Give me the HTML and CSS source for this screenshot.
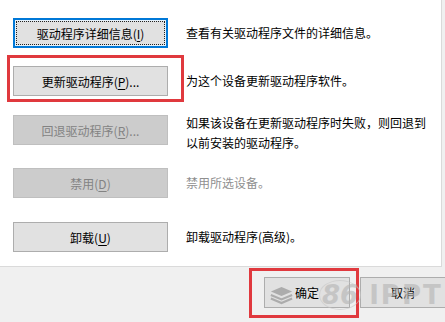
FILE: index.html
```html
<!DOCTYPE html>
<html lang="zh-CN">
<head>
  <meta charset="UTF-8">
  <title>驱动程序</title>
  <link rel="stylesheet" href="styles.css">
</head>
<body>

<div class="panel">
  <div class="row">
    <button class="btn focus"><span class="focus-rect">驱动程序详细信息(<u>I</u>)</span></button>
    <p class="desc">查看有关驱动程序文件的详细信息。</p>
  </div>
  <div class="row">
    <button class="btn">更新驱动程序(<u>P</u>)...</button>
    <p class="desc">为这个设备更新驱动程序软件。</p>
  </div>
  <div class="row row-3">
    <button class="btn" disabled>回退驱动程序(<u>R</u>)...</button>
    <p class="desc">如果该设备在更新驱动程序时失败，则回退到<br>以前安装的驱动程序。</p>
  </div>
  <div class="row row-4">
    <button class="btn" disabled>禁用(<u>D</u>)</button>
    <p class="desc muted">禁用所选设备。</p>
  </div>
  <div class="row row-5">
    <button class="btn">卸载(<u>U</u>)</button>
    <p class="desc">卸载驱动程序(高级)。</p>
  </div>
</div>

<div class="footer">
  <button class="btn small">确定</button>
  <button class="btn small">取消</button>
</div>

<!-- 标注框 -->
<div class="mark mark-update"></div>
<div class="mark mark-ok"></div>

<!-- 水印 -->
<div class="watermark">
  <svg width="23" height="20" viewBox="0 0 26 20">
    <path d="M13 1 L25 6 L13 11 L1 6 Z" fill="#8a8a8a"/>
    <path d="M1 10 L13 15 L25 10" stroke="#8a8a8a" stroke-width="2.5" fill="none"/>
    <path d="M1 14 L13 19 L25 14" stroke="#8a8a8a" stroke-width="2.5" fill="none"/>
  </svg>
  <span class="wm-num">86</span>
  <span class="wm-text">IPPT</span>
</div>

</body>
</html>
```

FILE: styles.css
```css
body {
  margin: 0;
  padding: 0;
  width: 445px;
  height: 322px;
  overflow: hidden;
  background-color: #f0f0f0;
  font-family: "Noto Sans CJK SC", "Microsoft YaHei", sans-serif;
  font-size: 12px;
  color: #000;
  position: relative;
}
.panel {
  background-color: #fff;
  width: 442px;
  height: 267px;
  border-right: 1px solid #dadada;
  border-bottom: 1px solid #dadada;
  padding-top: 18px;
  box-sizing: border-box;
  display: flex;
  flex-direction: column;
  gap: 18px;
}
.row {
  display: flex;
  align-items: flex-start;
  gap: 18px;
  padding-left: 13px;
  height: 30px;
}
.row-3 {
  margin-top: 1px;
}
.row-4 {
  margin-top: 5px;
}
.row-5 {
  margin-top: 6px;
}
.btn {
  width: 155px;
  height: 30px;
  flex-shrink: 0;
  background-color: #e1e1e1;
  border: 1px solid #adadad;
  font-family: inherit;
  font-size: 12px;
  color: #000;
  padding: 0;
  display: flex;
  align-items: center;
  justify-content: center;
}
.btn u {
  text-underline-offset: 2px;
}
.btn.focus {
  border: 2px solid #0078d7;
  background-color: #e5f1fb;
  padding: 1px;
}
.focus-rect {
  flex: 1;
  align-self: stretch;
  display: flex;
  align-items: center;
  justify-content: center;
  border: 1px dotted #222;
  background-color: #e1e1e1;
}
.btn:disabled {
  background-color: #cccccc;
  border-color: #bfbfbf;
  color: #838383;
}
.desc {
  margin: 0;
  line-height: 20px;
  padding-top: 5px;
}
.row-3 .desc {
  margin-top: -7px;
}
.muted {
  color: #8f8f8f;
}
.footer {
  display: flex;
  gap: 10px;
  padding: 10px 0 0 264px;
}
.btn.small {
  width: 86px;
  height: 31px;
}
.mark {
  position: absolute;
  border: 3px solid #e0393e;
  box-sizing: border-box;
}
.mark-update {
  left: 7px;
  top: 55px;
  width: 177px;
  height: 47px;
}
.mark-ok {
  left: 249px;
  top: 268px;
  width: 110px;
  height: 50px;
}
.watermark {
  position: absolute;
  left: 270px;
  top: 280px;
  display: flex;
  align-items: center;
  opacity: 0.6;
}
.watermark svg {
  margin-right: 26px;
}
.wm-num {
  font-family: "DejaVu Sans", sans-serif;
  font-weight: bold;
  font-style: italic;
  font-size: 26px;
  line-height: 28px;
  color: #b4b4b4;
  border: 1px solid #c8c8c8;
  border-radius: 50%;
  padding: 0 2px;
  margin-right: 8px;
}
.wm-text {
  font-family: "DejaVu Sans", sans-serif;
  font-weight: bold;
  font-size: 26px;
  line-height: 28px;
  color: #b4b4b4;
  letter-spacing: 2px;
}
```
